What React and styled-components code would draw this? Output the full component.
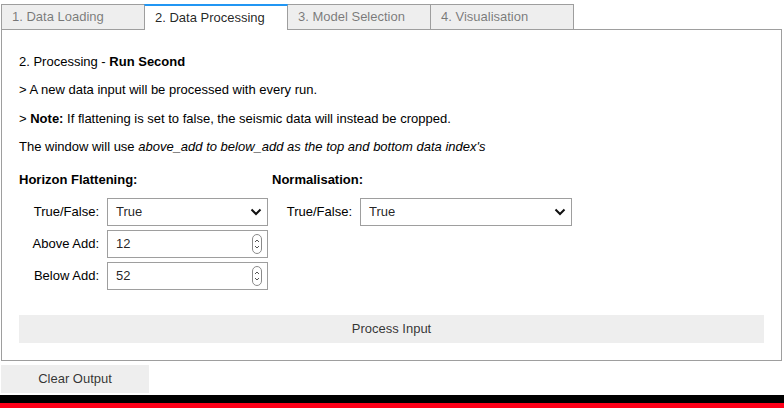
import React from 'react'
import styled, { createGlobalStyle } from 'styled-components'

const GlobalStyle = createGlobalStyle`
  html, body {
    margin: 0;
    padding: 0;
    background: #ffffff;
  }
  body {
    font-family: "Liberation Sans", Arial, Helvetica, sans-serif;
    font-size: 13px;
    color: #000;
    overflow: hidden;
  }
`

const Page = styled.div`
  padding: 4px 0 0 1px;
  width: 783px;
  box-sizing: border-box;
`

const TabBar = styled.div`
  display: flex;
  align-items: flex-start;
  height: 25px;
  position: relative;
  z-index: 1;
`

const Tab = styled.div`
  flex: 0 0 144px;
  box-sizing: border-box;
  margin-left: ${p => (p.$first ? '0' : '-1px')};
  height: ${p => (p.$active ? '26px' : '25px')};
  padding: 0 10px;
  border: 1px solid #9e9e9e;
  border-bottom: none;
  border-top: ${p => (p.$active ? '2px solid #2196f3' : '1px solid #9e9e9e')};
  background: ${p => (p.$active ? '#ffffff' : '#eeeeee')};
  color: ${p => (p.$active ? 'rgba(0,0,0,0.87)' : 'rgba(0,0,0,0.5)')};
  line-height: ${p => (p.$active ? '23px' : '24px')};
  white-space: nowrap;
  overflow: hidden;
  position: relative;
  z-index: ${p => (p.$active ? 2 : 1)};
`

const Panel = styled.div`
  width: 781px;
  box-sizing: border-box;
  border: 1px solid #9e9e9e;
  padding: 15px;
  display: flex;
  flex-direction: column;
`

const Note = styled.div`
  margin: 3px 2px 0;
  line-height: 28.4px;
  white-space: nowrap;

  & + & {
    margin-top: 0;
  }
`

const Settings = styled.div`
  display: flex;
  margin-top: 2px;
`

const Column = styled.div`
  display: flex;
  flex-direction: column;
`

const Heading = styled.div`
  margin: 2px;
  height: 28px;
  line-height: 28px;
  font-weight: bold;
`

const Row = styled.div`
  display: flex;
  align-items: center;
  margin: 2px;
  height: 28px;
`

const Label = styled.div`
  width: 80px;
  padding-right: 8px;
  text-align: right;
  white-space: nowrap;
`

const Field = styled.div`
  box-sizing: border-box;
  width: ${p => p.$width}px;
  height: 28px;
  border: 1px solid #9e9e9e;
  background: #fff;
  display: flex;
  align-items: center;
  justify-content: space-between;
  padding: 0 5px 0 8px;
  color: rgba(0,0,0,0.87);
`

const Spacer = styled.div`
  height: 21px;
`

const WideButton = styled.div`
  margin: 2px;
  height: 28px;
  line-height: 28px;
  background: #eeeeee;
  text-align: center;
  color: rgba(0,0,0,0.8);
`

const SmallButton = styled.div`
  margin-top: 4px;
  width: 148px;
  height: 28px;
  line-height: 28px;
  background: #eeeeee;
  text-align: center;
  color: rgba(0,0,0,0.8);
`

const Stripe = styled.div`
  margin-top: ${p => p.$gap}px;
  margin-left: -1px;
  width: 784px;
  height: 8px;
  background: ${p => p.$color};
`

const Chevron = () => (
  <svg width="12" height="8" viewBox="0 0 12 8">
    <path d="M1.5 1.5 L6 6 L10.5 1.5" fill="none" stroke="#111" strokeWidth="2" />
  </svg>
)

const Spinner = () => (
  <svg width="10" height="20" viewBox="0 0 10 20">
    <rect x="0.5" y="0.5" width="9" height="19" rx="4.5" fill="#fff" stroke="#8a8a8a" />
    <path d="M3 8 L5 6 L7 8" fill="none" stroke="#555" strokeWidth="1" />
    <path d="M3 12 L5 14 L7 12" fill="none" stroke="#555" strokeWidth="1" />
  </svg>
)

const Select = ({ width, value }) => (
  <Field $width={width}>
    <span>{value}</span>
    <Chevron />
  </Field>
)

const NumberInput = ({ width, value }) => (
  <Field $width={width}>
    <span>{value}</span>
    <Spinner />
  </Field>
)

const tabs = ['1. Data Loading', '2. Data Processing', '3. Model Selection', '4. Visualisation']

export default function App() {
  return (
    <Page>
      <GlobalStyle />
      <TabBar>
        {tabs.map((t, i) => (
          <Tab key={t} $first={i === 0} $active={i === 1}>{t}</Tab>
        ))}
      </TabBar>
      <Panel>
        <Note>2. Processing - <b>Run Second</b></Note>
        <Note>&gt; A new data input will be processed with every run.</Note>
        <Note>&gt; <b>Note:</b> If flattening is set to false, the seismic data will instead be cropped.</Note>
        <Note>The window will use <i>above_add to below_add as the top and bottom data index's</i></Note>
        <Settings>
          <Column>
            <Heading>Horizon Flattening:</Heading>
            <Row>
              <Label>True/False:</Label>
              <Select width={161} value="True" />
            </Row>
            <Row>
              <Label>Above Add:</Label>
              <NumberInput width={161} value="12" />
            </Row>
            <Row>
              <Label>Below Add:</Label>
              <NumberInput width={161} value="52" />
            </Row>
          </Column>
          <Column>
            <Heading>Normalisation:</Heading>
            <Row>
              <Label>True/False:</Label>
              <Select width={212} value="True" />
            </Row>
          </Column>
        </Settings>
        <Spacer />
        <WideButton>Process Input</WideButton>
      </Panel>
      <SmallButton>Clear Output</SmallButton>
      <Stripe $gap={2} $color="#000000" />
      <Stripe $gap={0} $color="#ff0019" />
    </Page>
  )
}
